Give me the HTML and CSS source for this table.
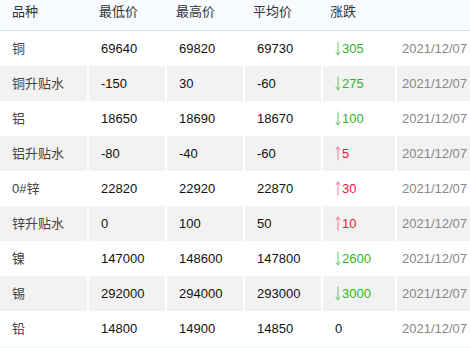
FILE: index.html
```html
<!DOCTYPE html>
<html lang="zh">
<head>
<meta charset="utf-8">
<link rel="stylesheet" href="styles.css">
</head>
<body>
<div class="board">
  <div class="head">
    <div class="hc">品种</div>
    <div class="hc">最低价</div>
    <div class="hc">最高价</div>
    <div class="hc">平均价</div>
    <div class="hc">涨跌</div>
  </div>
  <div class="rows">
    <div class="row"><div class="c name">铜</div><div class="c">69640</div><div class="c">69820</div><div class="c">69730</div><div class="c down"><svg class="ar" viewBox="0 0 6 15"><path d="M3 0.5V14M0.8 10.8L3 14.2L5.2 10.8"/></svg>305</div><div class="c date">2021/12/07</div></div>
    <div class="row alt"><div class="c name">铜升贴水</div><div class="c">-150</div><div class="c">30</div><div class="c">-60</div><div class="c down"><svg class="ar" viewBox="0 0 6 15"><path d="M3 0.5V14M0.8 10.8L3 14.2L5.2 10.8"/></svg>275</div><div class="c date">2021/12/07</div></div>
    <div class="row"><div class="c name">铝</div><div class="c">18650</div><div class="c">18690</div><div class="c">18670</div><div class="c down"><svg class="ar" viewBox="0 0 6 15"><path d="M3 0.5V14M0.8 10.8L3 14.2L5.2 10.8"/></svg>100</div><div class="c date">2021/12/07</div></div>
    <div class="row alt"><div class="c name">铝升贴水</div><div class="c">-80</div><div class="c">-40</div><div class="c">-60</div><div class="c up"><svg class="ar" viewBox="0 0 6 15"><path d="M3 14.5V1M0.8 4.2L3 0.8L5.2 4.2"/></svg>5</div><div class="c date">2021/12/07</div></div>
    <div class="row"><div class="c name">0#锌</div><div class="c">22820</div><div class="c">22920</div><div class="c">22870</div><div class="c up"><svg class="ar" viewBox="0 0 6 15"><path d="M3 14.5V1M0.8 4.2L3 0.8L5.2 4.2"/></svg>30</div><div class="c date">2021/12/07</div></div>
    <div class="row alt"><div class="c name">锌升贴水</div><div class="c">0</div><div class="c">100</div><div class="c">50</div><div class="c up"><svg class="ar" viewBox="0 0 6 15"><path d="M3 14.5V1M0.8 4.2L3 0.8L5.2 4.2"/></svg>10</div><div class="c date">2021/12/07</div></div>
    <div class="row"><div class="c name">镍</div><div class="c">147000</div><div class="c">148600</div><div class="c">147800</div><div class="c down"><svg class="ar" viewBox="0 0 6 15"><path d="M3 0.5V14M0.8 10.8L3 14.2L5.2 10.8"/></svg>2600</div><div class="c date">2021/12/07</div></div>
    <div class="row alt"><div class="c name">锡</div><div class="c">292000</div><div class="c">294000</div><div class="c">293000</div><div class="c down"><svg class="ar" viewBox="0 0 6 15"><path d="M3 0.5V14M0.8 10.8L3 14.2L5.2 10.8"/></svg>3000</div><div class="c date">2021/12/07</div></div>
    <div class="row"><div class="c name">铅</div><div class="c">14800</div><div class="c">14900</div><div class="c">14850</div><div class="c">0</div><div class="c date">2021/12/07</div></div>
  </div>
  <div class="foot"></div>
</div>
</body>
</html>
```
FILE: styles.css
```css
html, body {
  margin: 0;
  padding: 0;
  background: #fff;
  overflow: hidden;
}
body {
  font-family: "Liberation Sans", "Noto Sans CJK SC", sans-serif;
  font-size: 13px;
  color: #111;
  width: 470px;
  height: 348px;
}
.board {
  width: 480px;
}
.head {
  display: grid;
  grid-template-columns: 87px 77px 77px 77px 77px 1fr;
  background: #f7fbff;
  border-bottom: 1px solid #dddddd;
  box-sizing: border-box;
  height: 31px;
}
.hc {
  padding: 2px 0 0 12px;
  line-height: 19px;
  color: #333;
  white-space: nowrap;
}
.row {
  display: grid;
  grid-template-columns: 87px 76px 76px 76px 72px 76px;
  column-gap: 2px;
  height: 35px;
}
.c {
  padding-left: 12px;
  line-height: 35px;
  white-space: nowrap;
  overflow: hidden;
}
.row.alt .c {
  background: #f2f2f2;
}
.name {
  color: #444;
}
.date {
  padding-left: 5px;
  color: #888;
}
.down {
  color: #2fb52f;
}
.up {
  color: #f0143c;
}
.ar {
  width: 6px;
  height: 15px;
  vertical-align: -3px;
  margin-right: 1px;
  fill: none;
  stroke-width: 1;
}
.down .ar {
  stroke: #6cc36c;
}
.up .ar {
  stroke: #f27aa6;
}
.foot {
  height: 10px;
  background: #f7fbff;
}
```
